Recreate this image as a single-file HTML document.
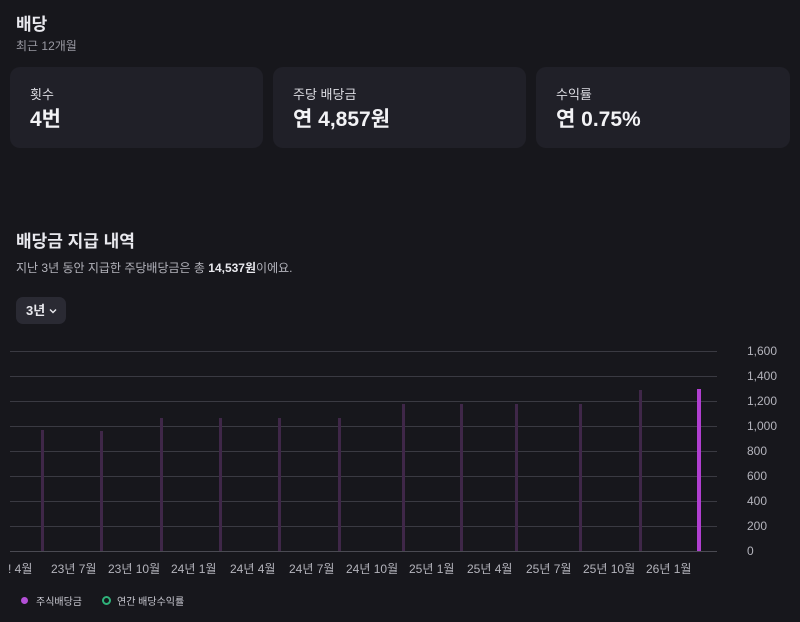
<!DOCTYPE html>
<html><head><meta charset="utf-8"><style>
body{margin:0;width:800px;height:622px;background:#17171c;font-family:"Liberation Sans","Noto Sans CJK KR",sans-serif;color:#e9e9ee;position:relative;overflow:hidden}
.a{position:absolute;white-space:nowrap}
.card{position:absolute;top:67px;height:81px;background:#202028;border-radius:10px}
.card .l{position:absolute;left:20px;top:17px;font-size:13px;color:#dcdce2}
.card .v{position:absolute;left:20px;top:36px;font-size:21px;font-weight:bold;color:#f2f2f5}
.g{position:absolute;left:10px;width:707px;height:1px;background:#3a3a42}
.b{position:absolute;width:3px;background:#3f2748;bottom:71px}
.y{position:absolute;left:747px;font-size:12px;color:#b4b4bc}
.x{position:absolute;top:560px;font-size:12px;color:#b4b4bc;white-space:nowrap}
</style></head><body>
<div class="a" style="left:16px;top:10px;font-size:17px;font-weight:bold">배당</div>
<div class="a" style="left:16px;top:37px;font-size:12px;color:#9a9aa3">최근 12개월</div>
<div class="card" style="left:10px;width:253px"><div class="l">횟수</div><div class="v">4번</div></div>
<div class="card" style="left:273px;width:253px"><div class="l">주당 배당금</div><div class="v">연 4,857원</div></div>
<div class="card" style="left:536px;width:254px"><div class="l">수익률</div><div class="v">연 0.75%</div></div>
<div class="a" style="left:16px;top:227px;font-size:17px;font-weight:bold">배당금 지급 내역</div>
<div class="a" style="left:16px;top:259px;font-size:12px;color:#b4b4bc">지난 3년 동안 지급한 주당배당금은 총 <b style="color:#e9e9ee">14,537원</b>이에요.</div>
<div class="a" style="left:16px;top:297px;width:50px;height:27px;background:#2a2a33;border-radius:7px;font-size:13px;font-weight:bold;line-height:27px;text-indent:10px">3년<svg width="10" height="10" viewBox="0 0 10 10" style="position:absolute;left:32px;top:9px"><path d="M2 3.5 L5 6.5 L8 3.5" fill="none" stroke="#e9e9ee" stroke-width="1.4"/></svg></div>
<div class="g" style="top:351px"></div><div class="g" style="top:376px"></div><div class="g" style="top:401px"></div><div class="g" style="top:426px"></div><div class="g" style="top:451px"></div><div class="g" style="top:476px"></div><div class="g" style="top:501px"></div><div class="g" style="top:526px"></div><div class="g" style="top:551px;background:#4a4a52"></div>
<div class="b" style="left:41px;top:430px"></div>
<div class="b" style="left:100px;top:431px"></div>
<div class="b" style="left:160px;top:418px"></div>
<div class="b" style="left:219px;top:418px"></div>
<div class="b" style="left:278px;top:418px"></div>
<div class="b" style="left:338px;top:418px"></div>
<div class="b" style="left:402px;top:404px"></div>
<div class="b" style="left:460px;top:404px"></div>
<div class="b" style="left:515px;top:404px"></div>
<div class="b" style="left:579px;top:404px"></div>
<div class="b" style="left:639px;top:390px"></div>
<div class="b" style="left:697px;top:389px;width:4px;background:#b03fd0"></div>
<div class="y" style="top:344px">1,600</div><div class="y" style="top:369px">1,400</div><div class="y" style="top:394px">1,200</div><div class="y" style="top:419px">1,000</div><div class="y" style="top:444px">800</div><div class="y" style="top:469px">600</div><div class="y" style="top:494px">400</div><div class="y" style="top:519px">200</div><div class="y" style="top:544px">0</div>
<div class="x" style="left:8px">! 4월</div><div class="x" style="left:51px">23년 7월</div><div class="x" style="left:108px">23년 10월</div><div class="x" style="left:171px">24년 1월</div><div class="x" style="left:230px">24년 4월</div><div class="x" style="left:289px">24년 7월</div><div class="x" style="left:346px">24년 10월</div><div class="x" style="left:409px">25년 1월</div><div class="x" style="left:467px">25년 4월</div><div class="x" style="left:526px">25년 7월</div><div class="x" style="left:583px">25년 10월</div><div class="x" style="left:646px">26년 1월</div>
<div class="a" style="left:21px;top:597px;width:7px;height:7px;border-radius:50%;background:#b34fd6"></div>
<div class="a" style="left:36px;top:593px;font-size:10px;color:#c8c8d0">주식배당금</div>
<div class="a" style="left:102px;top:596px;width:5px;height:5px;border-radius:50%;border:2px solid #2fb27a"></div>
<div class="a" style="left:117px;top:593px;font-size:10px;color:#c8c8d0">연간 배당수익률</div>
</body></html>
